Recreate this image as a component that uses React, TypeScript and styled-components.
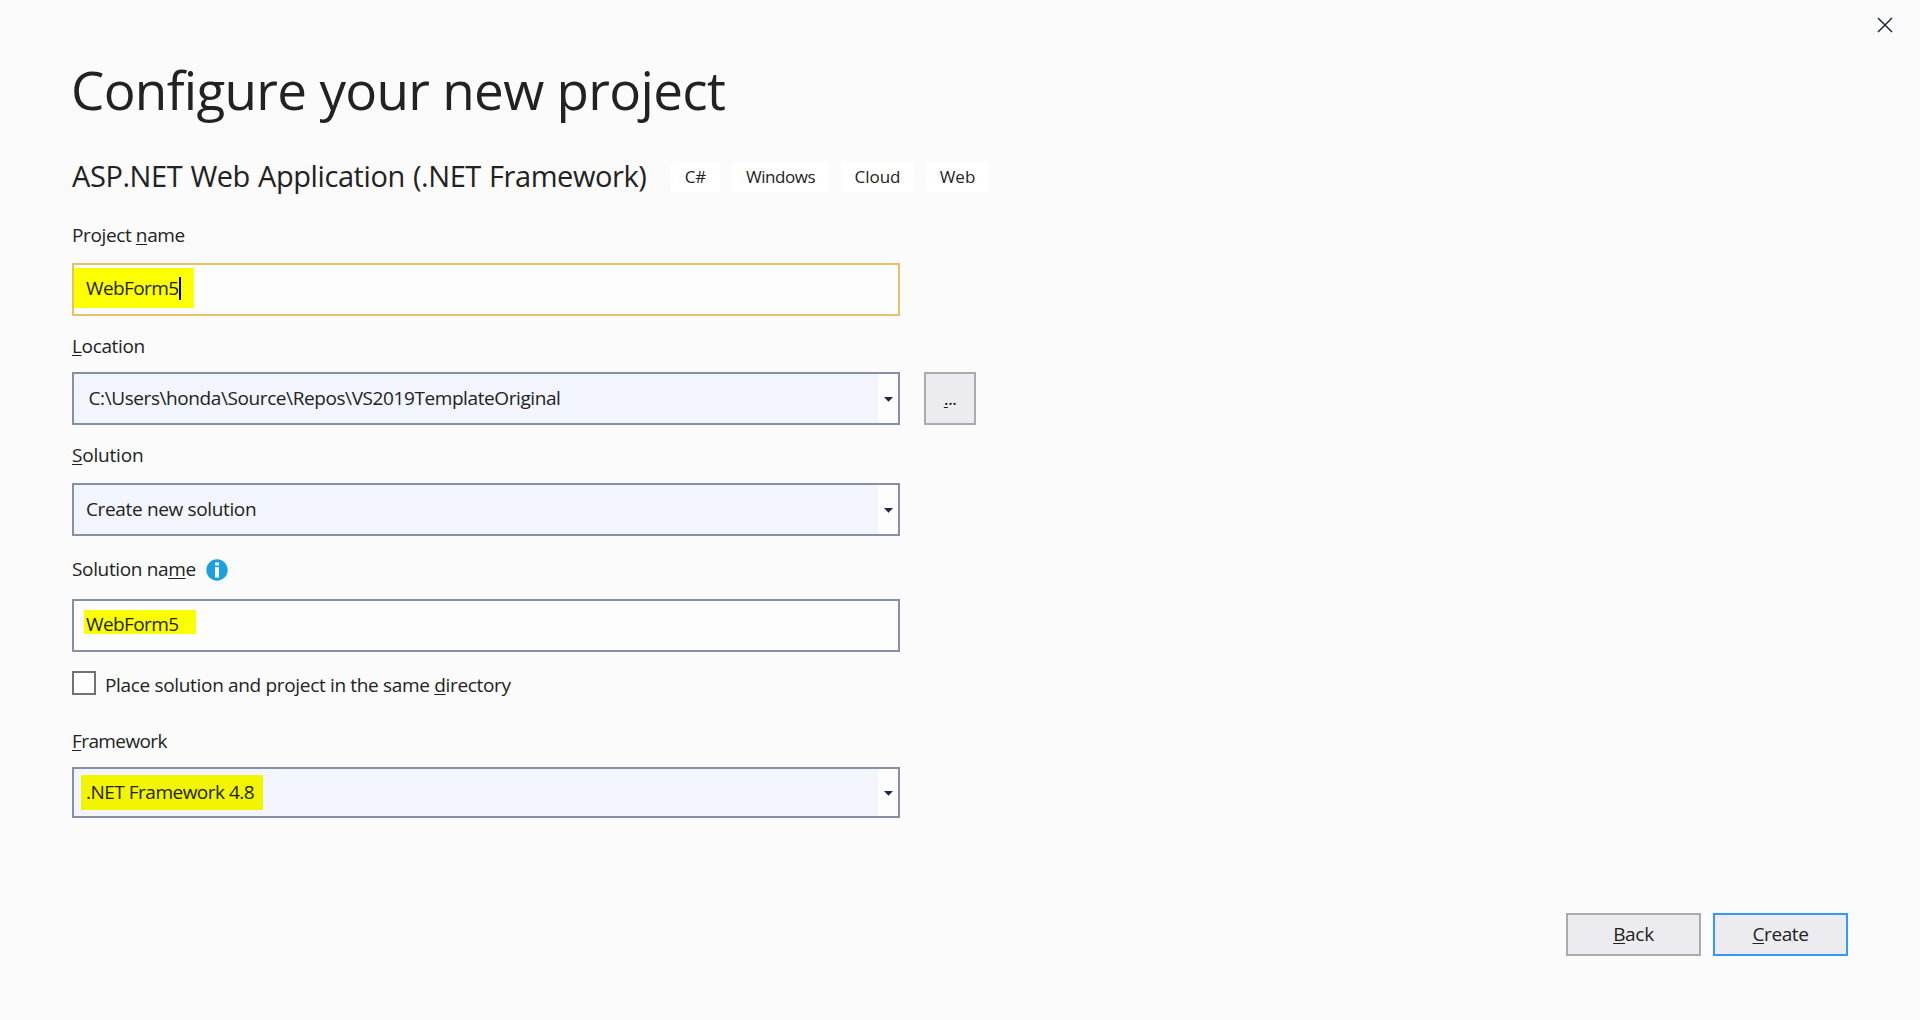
import React from "react";
import styled, { createGlobalStyle } from "styled-components";

const GlobalStyle = createGlobalStyle`
  * { box-sizing: border-box; }
  body { margin: 0; background: #fbfbfb; }
`;

const Dialog = styled.main`
  display: flex;
  flex-direction: column;
  position: relative;
  width: 1920px;
  height: 1020px;
  padding: 54px 72px 64px;
  overflow: hidden;
  background: #fbfbfb;
  color: #222;
  font-family: "Open Sans", "Noto Sans", sans-serif;
  font-size: 19px;
  line-height: 26px;
  white-space: pre;
`;

const CloseButton = styled.button`
  position: absolute;
  top: 13px;
  right: 23px;
  display: grid;
  place-items: center;
  width: 24px;
  height: 24px;
  padding: 0;
  border: 0;
  background: none;
`;

const Title = styled.h1`
  margin: 0 0 0 -1px;
  font-size: 53px;
  font-weight: 400;
  line-height: 72px;
  letter-spacing: -0.7px;
`;

const TemplateRow = styled.div`
  display: flex;
  align-items: flex-start;
  height: 30px;
  margin-top: 36px;
`;

const TemplateName = styled.h2`
  width: 599px;
  margin: 0;
  font-size: 29px;
  font-weight: 400;
  line-height: 28px;
  letter-spacing: -0.42px;
  word-spacing: 1px;
`;

const Tags = styled.div`
  display: flex;
  gap: 12px;
`;

const Tag = styled.span<{ $width: number; $spacing?: number }>`
  width: ${(p) => p.$width}px;
  height: 30px;
  border-radius: 4px;
  background: #fff;
  font-size: 17px;
  line-height: 29px;
  text-align: center;
  letter-spacing: ${(p) => p.$spacing ?? 0}px;
`;

const Label = styled.label<{ $top: number; $bottom: number; $spacing: number }>`
  display: flex;
  height: 26px;
  margin: ${(p) => p.$top}px 0 ${(p) => p.$bottom}px;
  letter-spacing: ${(p) => p.$spacing}px;
`;

const AccessKey = styled.span`
  text-decoration: underline;
  text-decoration-thickness: 1px;
  text-underline-offset: 2px;
  text-decoration-skip-ink: none;
`;

const FieldRow = styled.div`
  display: flex;
  gap: 24px;
`;

const Field = styled.div<{ $border?: string; $height?: number }>`
  display: flex;
  align-items: flex-start;
  width: 828px;
  height: ${(p) => p.$height ?? 53}px;
  flex: none;
  border: 2px solid ${(p) => p.$border ?? "#858fa5"};
  background: #fdfdfd;
`;

const Selection = styled.div`
  display: flex;
  align-items: flex-start;
  flex: 1;
  height: 100%;
  background: #f2f5fd;
`;

const DropDown = styled.div`
  display: flex;
  align-items: center;
  justify-content: center;
  width: 20px;
  height: 100%;
  padding: 2px 0 0 1px;
`;

const Value = styled.span<{ $left: number; $top: number; $spacing: number }>`
  padding: ${(p) => p.$top}px 0 0 ${(p) => p.$left}px;
  letter-spacing: ${(p) => p.$spacing}px;
`;

const Highlight = styled.mark<{ $x: number; $y: number; $w: number; $h: number; $left: number; $top: number; $spacing: number; $color?: string }>`
  display: flex;
  width: ${(p) => p.$w}px;
  height: ${(p) => p.$h}px;
  margin: ${(p) => p.$y}px 0 0 ${(p) => p.$x}px;
  padding: ${(p) => p.$top}px 0 0 ${(p) => p.$left}px;
  background: ${(p) => p.$color ?? "#fcff00"};
  color: #24240a;
  letter-spacing: ${(p) => p.$spacing}px;
`;

const Caret = styled.i`
  width: 2px;
  height: 23px;
  margin-top: 2px;
  background: #000;
`;

const InfoIcon = styled.svg`
  width: 22px;
  height: 22px;
  margin: 3px 0 0 10px;
`;

const Button = styled.button<{ $w: number; $h: number; $border?: string; $spacing?: number; $top: number }>`
  width: ${(p) => p.$w}px;
  height: ${(p) => p.$h}px;
  padding: ${(p) => p.$top}px 0 0;
  display: flex;
  justify-content: center;
  border: 2px solid ${(p) => p.$border ?? "#ababab"};
  background: #ececf0;
  color: inherit;
  font: inherit;
  letter-spacing: ${(p) => p.$spacing ?? 0}px;
`;

const CheckRow = styled.label`
  display: flex;
  height: 27px;
  margin-top: 19px;
  letter-spacing: -0.33px;
`;

const CheckBox = styled.span`
  width: 24px;
  height: 24px;
  margin-right: 9px;
  border: 2px solid #717171;
  background: #fefefe;
`;

const CheckText = styled.span`
  padding-top: 1px;
`;

const Footer = styled.footer`
  display: flex;
  justify-content: flex-end;
  gap: 12px;
  margin-top: auto;
`;

const Arrow = () => (
  <DropDown>
    <svg width="9" height="5" viewBox="0 0 9 5">
      <path d="M0 0h9L4.5 4.8z" fill="#1b293e" />
    </svg>
  </DropDown>
);

export default function App() {
  return (
    <>
      <GlobalStyle />
      <Dialog>
        <CloseButton aria-label="Close">
          <svg width="16" height="16" viewBox="0 0 16 16">
            <path d="M1 1l14 14M15 1L1 15" stroke="#1b293e" strokeWidth="1.5" />
          </svg>
        </CloseButton>
        <Title>Configure your new project</Title>
        <TemplateRow>
          <TemplateName>ASP.NET Web Application (.NET Framework)</TemplateName>
          <Tags>
            <Tag $width={49}>C#</Tag>
            <Tag $width={97} $spacing={-0.45}>Windows</Tag>
            <Tag $width={73}>Cloud</Tag>
            <Tag $width={63}>Web</Tag>
          </Tags>
        </TemplateRow>

        <Label $top={30} $bottom={15} $spacing={-0.38}>
          <span>Project <AccessKey>n</AccessKey>ame</span>
        </Label>
        <Field $border="#e5c365">
          <Highlight $x={0} $y={3} $w={120} $h={40} $left={12} $top={7} $spacing={-0.6}>
            WebForm5<Caret />
          </Highlight>
        </Field>

        <Label $top={17} $bottom={13} $spacing={-0.35}>
          <span><AccessKey>L</AccessKey>ocation</span>
        </Label>
        <FieldRow>
          <Field>
            <Selection>
              <Value $left={14.5} $top={11} $spacing={-0.41}>{"C:\\Users\\honda\\Source\\Repos\\VS2019TemplateOriginal"}</Value>
            </Selection>
            <Arrow />
          </Field>
          <Button $w={52} $h={53} $top={11} $spacing={-0.9}>
            <span><AccessKey>.</AccessKey>..</span>
          </Button>
        </FieldRow>

        <Label $top={17} $bottom={15} $spacing={-0.2}>
          <span><AccessKey>S</AccessKey>olution</span>
        </Label>
        <Field>
          <Selection>
            <Value $left={12} $top={11} $spacing={-0.35}>Create new solution</Value>
          </Selection>
          <Arrow />
        </Field>

        <Label $top={20} $bottom={17} $spacing={-0.35}>
          <span>Solution na<AccessKey>m</AccessKey>e</span>
          <InfoIcon viewBox="0 0 22 22">
            <circle cx="11" cy="11" r="10.7" fill="#1ba1e2" />
            <path d="M9 3.5h4v3H9zM9 8.2h4v10.3H9z" fill="#fff" />
          </InfoIcon>
        </Label>
        <Field>
          <Highlight $x={10} $y={9} $w={112} $h={24} $left={2} $top={1} $spacing={-0.6}>WebForm5</Highlight>
        </Field>

        <CheckRow>
          <CheckBox />
          <CheckText>Place solution and project in the same <AccessKey>d</AccessKey>irectory</CheckText>
        </CheckRow>

        <Label $top={30} $bottom={13} $spacing={-0.6}>
          <span><AccessKey>F</AccessKey>ramework</span>
        </Label>
        <Field $height={51}>
          <Selection>
            <Highlight $x={7} $y={6} $w={182} $h={35} $left={5} $top={4} $spacing={-0.5} $color="#f2f500">.NET Framework 4.8</Highlight>
          </Selection>
          <Arrow />
        </Field>

        <Footer>
          <Button $w={135} $h={43} $top={6} $spacing={-0.3}>
            <span><AccessKey>B</AccessKey>ack</span>
          </Button>
          <Button $w={135} $h={43} $top={6} $spacing={-0.4} $border="#3399ff">
            <span><AccessKey>C</AccessKey>reate</span>
          </Button>
        </Footer>
      </Dialog>
    </>
  );
}
